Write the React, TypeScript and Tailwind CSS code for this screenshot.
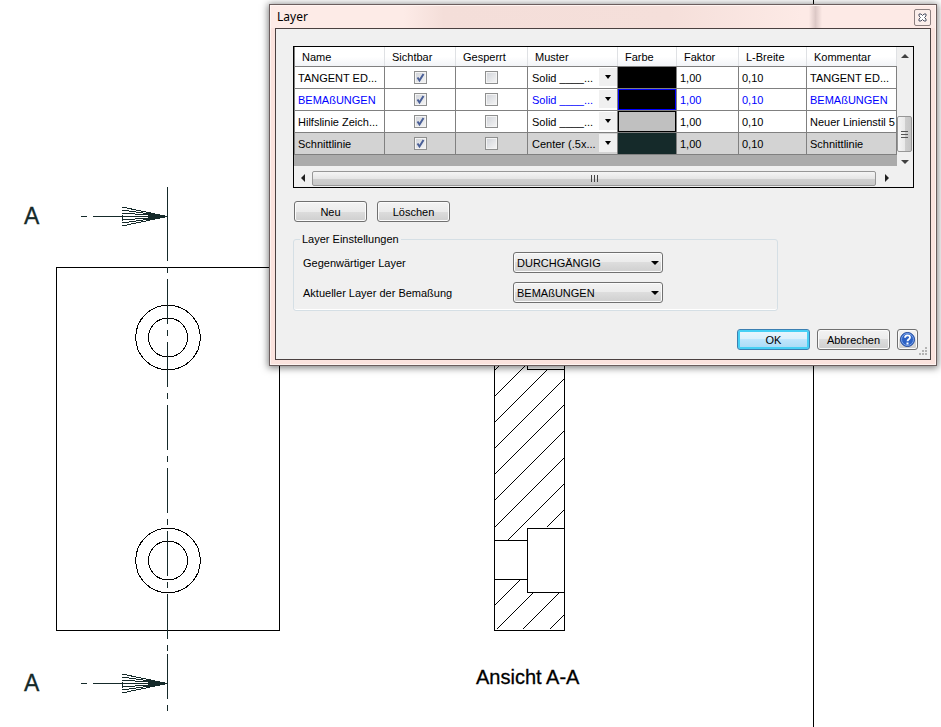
import type { ReactNode } from "react";

type Layer = {
  name: string;
  pattern: string;
  swatch: string;
  comment: string;
  text: string;
  row: string;
};

const layers: Layer[] = [
  { name: "TANGENT ED...", pattern: "Solid ____...", swatch: "bg-black", comment: "TANGENT ED...", text: "text-black", row: "bg-white" },
  { name: "BEMAßUNGEN", pattern: "Solid ____...", swatch: "bg-black border border-[#0000ff]", comment: "BEMAßUNGEN", text: "text-[#0000ff]", row: "bg-white" },
  { name: "Hilfslinie Zeich...", pattern: "Solid ____...", swatch: "bg-[#c0c0c0] border border-black", comment: "Neuer Linienstil 5", text: "text-black", row: "bg-white" },
  { name: "Schnittlinie", pattern: "Center (.5x...", swatch: "bg-[#152a2a]", comment: "Schnittlinie", text: "text-black", row: "bg-[#d3d3d3]" },
];

const columns = [
  { label: "Name", width: "w-[90px]" },
  { label: "Sichtbar", width: "w-[71px]" },
  { label: "Gesperrt", width: "w-[72px]" },
  { label: "Muster", width: "w-[90px]" },
  { label: "Farbe", width: "w-[59px]" },
  { label: "Faktor", width: "w-[62px]" },
  { label: "L-Breite", width: "w-[68px]" },
  { label: "Kommentar", width: "w-[90px]" },
];

const face =
  "rounded-[3px] border border-[#707070] bg-[linear-gradient(#f3f3f3,#ebebeb_50%,#dddddd_50%,#cfcfcf)] shadow-[inset_0_0_0_1px_#fbfbfb]";

function SectionArrow({ y }: { y: number }) {
  return (
    <g transform={`translate(0 ${y})`} stroke="#152a2a" fill="none">
      <path d="M81 .5h6M93 .5h74M122.500 -1v6" />
      <path d="M167 .5L122-9M167 .5L122-6M167 .5L122-3M167 .5L122 4M167 .5L122 7M167 .5L122 10" />
      <path d="M165 .5L148-2v5z" fill="#152a2a" />
    </g>
  );
}

function Drawing() {
  return (
    <svg width="941" height="727" viewBox="0 0 941 727" className="block max-w-none shrink-0" aria-label="Ansicht A-A">
      <g shapeRendering="crispEdges" fill="none" stroke="#000">
        <path d="M813.500 0v727" />
        <rect x="56.500" y="267.500" width="223" height="363" />
        <circle cx="168" cy="337.500" r="32.300" />
        <circle cx="168" cy="337.500" r="19.500" />
        <circle cx="168" cy="560.500" r="32.300" />
        <circle cx="168" cy="560.500" r="19.500" />
        <path
          stroke="#152a2a"
          d="M167.500 187v74M167.500 267v6M167.500 279v45M167.500 330v6M167.500 342v45M167.500 393v6M167.500 405v45M167.500 456v6M167.500 468v45M167.500 519v6M167.500 531v45M167.500 582v6M167.500 594v45M167.500 645v6M167.500 654v45M167.500 705v6"
        />
        <SectionArrow y={216} />
        <SectionArrow y={683} />
        <path d="M494.500 300V630.500H564.500V300M527.500 360V369.500H564.500M527.500 528.500H564.500M527.500 528V592.500H564.500M494.500 540.500H527.500M494.500 579.500H527.500" />
        <path d="M495 370l10-10M495 396l32-32M495 422l52-52M495 448l69-69M495 474l69-69M495 500l69-69M495 527l69-69M508 540l56-56M547 527l17-17M495 605l26-26M497 629l37-37M523 629l37-37M550 629l14-14" />
      </g>
      <g fontFamily="'Liberation Sans', Arial, sans-serif">
        <text x="24" y="224" fontSize="23" fill="#152a2a" stroke="#152a2a" strokeWidth="0.300">A</text>
        <text x="24" y="691" fontSize="23" fill="#152a2a" stroke="#152a2a" strokeWidth="0.300">A</text>
        <text x="476" y="684" fontSize="20" stroke="#000" strokeWidth="0.300">Ansicht A-A</text>
      </g>
    </svg>
  );
}

function Triangle({ dir, className = "" }: { dir: "up" | "down" | "left" | "right"; className?: string }) {
  const paths = { up: "M0 6L4 2L8 6z", down: "M0 2H8L4 6z", left: "M6 0L2 4L6 8z", right: "M2 0L6 4L2 8z" };
  return (
    <svg width="8" height="8" viewBox="0 0 8 8" className={className} aria-hidden="true">
      <path d={paths[dir]} fill="currentColor" />
    </svg>
  );
}

function Tick({ label, checked }: { label: string; checked?: boolean }) {
  return (
    <span className="relative mx-auto block size-[13px]">
      <input
        type="checkbox"
        aria-label={label}
        defaultChecked={checked}
        className="peer block size-[13px] appearance-none border border-[#8e8f8f] bg-[linear-gradient(135deg,#cfd2d8,#f6f6f6)] shadow-[inset_0_0_0_1px_#f4f4f4]"
      />
      <svg viewBox="0 0 13 13" className="pointer-events-none absolute inset-0 hidden size-[13px] peer-checked:block" aria-hidden="true">
        <path d="M3.500 6.500L5.500 9.500L9.500 3" fill="none" stroke="#4a5f97" strokeWidth="2" />
      </svg>
    </span>
  );
}

function PushButton({ children }: { children: ReactNode }) {
  return <button type="button" className={`h-[21px] w-[73px] ${face}`}>{children}</button>;
}

function Choice({ id, label, value }: { id: string; label: string; value: string }) {
  return (
    <div className="flex h-[21px] items-center">
      <label htmlFor={id} className="w-[210px]">{label}</label>
      <span className="relative block w-[150px]">
        <select id={id} className={`block h-[21px] w-full appearance-none pr-5 pl-[3px] ${face}`}>
          <option>{value}</option>
        </select>
        <Triangle dir="down" className="pointer-events-none absolute top-[7px] right-[4px]" />
      </span>
    </div>
  );
}

function LayerTable() {
  const cell = "border-r border-b border-[#808080] p-0";
  return (
    <div className="w-[621px] border border-black bg-[#ababab]">
      <div className="flex">
        <div className="w-[603px]">
          <table className="w-full table-fixed border-separate border-spacing-0 border-l border-[#808080]">
            <thead>
              <tr className="h-[20px]">
                {columns.map((c) => (
                  <th key={c.label} className={`${c.width} border-b border-[#808080] bg-[linear-gradient(90deg,transparent_calc(100%-1px),#dfe1e4_0),linear-gradient(#fff_50%,#f2f4f7)] p-0 pl-[7px] text-left font-normal`}>
                    {c.label}
                  </th>
                ))}
              </tr>
            </thead>
            <tbody>
              {layers.map((l) => (
                <tr key={l.name} className={`h-[22px] whitespace-nowrap ${l.row} ${l.text}`}>
                  <td className={`${cell} pl-[3px]`}>{l.name}</td>
                  <td className={cell}><Tick label={`${l.name} Sichtbar`} checked /></td>
                  <td className={cell}><Tick label={`${l.name} Gesperrt`} /></td>
                  <td className={cell}>
                    <span className="relative block">
                      <select aria-label={`${l.name} Muster`} className="block h-[21px] w-full appearance-none bg-transparent pl-[4px]">
                        <option>{l.pattern}</option>
                      </select>
                      <span className="pointer-events-none absolute top-px right-0 flex h-[18px] w-[18px] items-center justify-center bg-[#f0f0f0] text-black">
                        <svg width="6" height="4" viewBox="0 0 6 4" aria-hidden="true"><path d="M0 0H6L3 4z" /></svg>
                      </span>
                    </span>
                  </td>
                  <td className={cell}><span className={`block h-[21px] ${l.swatch}`} /></td>
                  <td className={`${cell} pl-[3px]`}>1,00</td>
                  <td className={`${cell} pl-[3px]`}>0,10</td>
                  <td className={`${cell} pl-[3px]`}>{l.comment}</td>
                </tr>
              ))}
            </tbody>
          </table>
          <div className="h-[11px]" />
        </div>
        <div className="flex w-4 flex-col items-start bg-[#f0f0f0] text-[#404040]">
          <button type="button" aria-label="Nach oben" className="flex h-[17px] w-full items-center justify-center"><Triangle dir="up" /></button>
          <div className="flex-1" />
          <div className="flex h-[36px] w-[15px] items-center justify-center rounded-[2px] border border-[#979797] bg-[linear-gradient(90deg,#f5f5f5,#e9e9e9_50%,#cfcfcf_50%,#c5c5c5)]">
            <svg width="7" height="9" aria-hidden="true"><path d="M0 1.500h7M0 4.500h7M0 7.500h7" stroke="#555" /></svg>
          </div>
          <button type="button" aria-label="Nach unten" className="flex h-[14px] w-full items-end justify-center"><Triangle dir="down" /></button>
        </div>
      </div>
      <div className="flex h-[21px] items-center bg-[#f0f0f0] pt-[3px] text-[#202020]">
        <button type="button" aria-label="Nach links" className="flex w-[18px] justify-center"><Triangle dir="left" /></button>
        <div className="flex h-[15px] flex-1 items-center justify-center rounded-[2px] border border-[#979797] bg-[linear-gradient(#f5f5f5,#e6e6e6_50%,#d0d0d0_50%,#c8c8c8)]">
          <svg width="9" height="7" aria-hidden="true"><path d="M1.500 0v7M4.500 0v7M7.500 0v7" stroke="#444" /></svg>
        </div>
        <button type="button" aria-label="Nach rechts" className="mr-[15px] flex w-[22px] justify-center"><Triangle dir="right" /></button>
      </div>
    </div>
  );
}

function LayerDialog() {
  return (
    <section
      role="dialog"
      aria-labelledby="dialog-title"
      className="absolute top-1 left-[269px] w-[668px] border border-[#6b5d5d] bg-[#fbe3de] px-[5px] pb-[5px] shadow-[0_1px_7px_1px_rgba(0,0,0,0.5),inset_0_0_0_1px_#fff4f1]"
    >
      <header className="-mx-[4px] mt-px flex h-[22px] items-center justify-between bg-[linear-gradient(90deg,#fdebe7_20%,#f4ded9_26%,#f5dfda_60%,#fdeae6_80%,transparent_80%),linear-gradient(90deg,#fdeae6_81%,#dcc8c6_82%,#fdeae6_83%)] pr-[4px] pl-[6px]">
        <h1 id="dialog-title" className="font-['Noto_Sans','Open_Sans',sans-serif] text-[12px]">Layer</h1>
        <button type="button" aria-label="Schließen" className="flex size-[17px] items-center justify-center rounded-[2px] border border-[#8d8080] bg-[#fbeeeb]">
          <svg width="9" height="9" viewBox="0 0 9 9" aria-hidden="true">
            <path d="M1 1h2l1.500 1.500L6 1h2v2L6.500 4.500L8 6v2H6L4.500 6.500L3 8H1V6l1.500-1.500L1 3z" fill="#fff" stroke="#4d5063" />
          </svg>
        </button>
      </header>
      <div className="relative border border-[#4a4040] bg-[#f0f0f0] pt-[17px] pr-[12px] pb-[9px] pl-[17px]">
        <LayerTable />
        <div className="mt-[13px] ml-px flex gap-[10px]">
          <PushButton>Neu</PushButton>
          <PushButton>Löschen</PushButton>
        </div>
        <fieldset className="mt-[11px] w-[485px] rounded-[3px] border border-[#d5dfe5] px-[9px] pb-[7px] shadow-[inset_0_-1px_0_#fff]">
          <legend className="-ml-[3px] px-[2px] leading-3">Layer Einstellungen</legend>
          <div className="flex flex-col gap-[9px] pt-[7px]">
            <Choice id="current-layer" label="Gegenwärtiger Layer" value="DURCHGÄNGIG" />
            <Choice id="dimension-layer" label="Aktueller Layer der Bemaßung" value="BEMAßUNGEN" />
          </div>
        </fieldset>
        <footer className="mt-[18px] flex justify-end gap-[7px]">
          <button type="button" className="h-[21px] w-[73px] rounded-[3px] border border-[#3c7fb1] bg-[linear-gradient(#eaf6fd,#d9f0fc_50%,#bee6fd_50%,#a7d9f5)] shadow-[inset_0_0_0_2px_#46d0f5]">OK</button>
          <PushButton>Abbrechen</PushButton>
          <button type="button" aria-label="Hilfe" className={`flex size-[21px] items-center justify-center ${face}`}>
            <svg width="17" height="17" viewBox="0 0 17 17" className="shrink-0" aria-hidden="true">
              <circle cx="8.500" cy="8.500" r="7" fill="#2d62c4" stroke="#1d469b" />
              <circle cx="8.500" cy="8.500" r="6" fill="none" stroke="#7ba4ec" />
              <path d="M6 6.800C6 3.500 11 3.500 11 6.500C11 8.300 8.500 8.200 8.500 10.300" fill="none" stroke="#fff" strokeWidth="1.800" />
              <rect x="7.500" y="11.500" width="2" height="2" fill="#fff" />
            </svg>
          </button>
        </footer>
        <svg width="10" height="10" className="absolute right-[2px] bottom-[2px]" aria-hidden="true">
          <path d="M7 1h2M4 4h2M7 4h2M1 7h2M4 7h2M7 7h2" stroke="#b4b4b4" strokeWidth="2" />
        </svg>
      </div>
    </section>
  );
}

export default function App() {
  return (
    <main className="relative min-h-screen overflow-hidden bg-white font-['Liberation_Sans',Arial,sans-serif] text-[11px] leading-[14px] text-black">
      <Drawing />
      <LayerDialog />
    </main>
  );
}
